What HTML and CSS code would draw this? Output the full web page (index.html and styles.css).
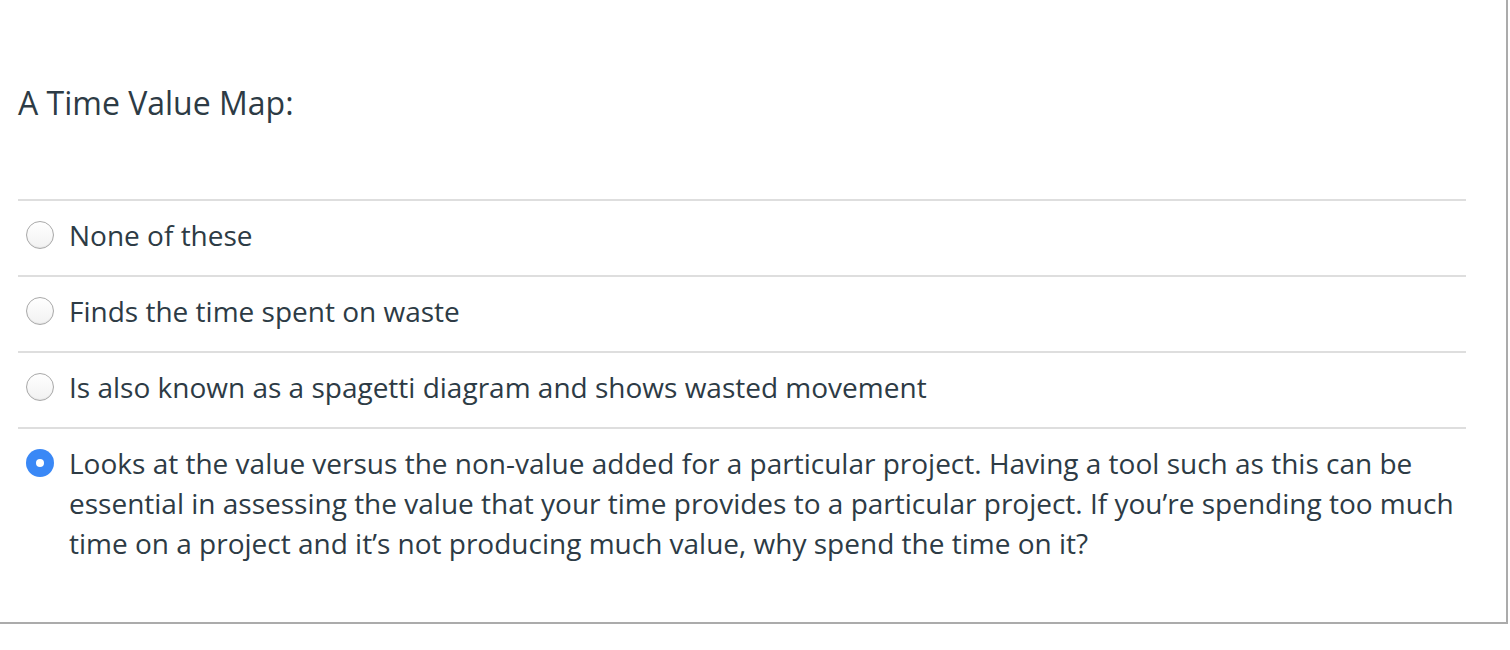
FILE: index.html
```html
<!DOCTYPE html>
<html>
<head>
<meta charset="utf-8">
<link rel="stylesheet" href="styles.css">
</head>
<body>
<div class="card">
  <div class="question">A Time Value Map:</div>
  <div class="answers">
    <div class="answer">
      <span class="radio"></span>
      <span class="label">None of these</span>
    </div>
    <div class="answer">
      <span class="radio"></span>
      <span class="label">Finds the time spent on waste</span>
    </div>
    <div class="answer">
      <span class="radio"></span>
      <span class="label">Is also known as a spagetti diagram and shows wasted movement</span>
    </div>
    <div class="answer">
      <span class="radio checked"></span>
      <span class="label">Looks at the value versus the non-value added for a particular project. Having a tool such as this can be essential in assessing the value that your time provides to a particular project. If you’re spending too much time on a project and it’s not producing much value, why spend the time on it?</span>
    </div>
  </div>
</div>
</body>
</html>
```

FILE: styles.css
```css
html, body {
  margin: 0;
  padding: 0;
  background: #ffffff;
}

.card {
  box-sizing: border-box;
  width: 1508px;
  height: 624px;
  border-right: 2px solid #ababab;
  border-bottom: 2px solid #ababab;
  padding: 0 40px 0 18px;
  font-family: "Open Sans", "Liberation Sans", sans-serif;
  color: #2d3b45;
}

.question {
  font-size: 32px;
  line-height: 44px;
  padding-top: 81px;
  box-sizing: border-box;
  height: 199px;
}

.answer {
  display: flex;
  align-items: flex-start;
  border-top: 2px solid #dedede;
  padding: 14px 0 20px 8px;
  gap: 15px;
}

.label {
  font-size: 28px;
  line-height: 40px;
}

.radio {
  flex: none;
  box-sizing: border-box;
  width: 28px;
  height: 28px;
  margin-top: 6px;
  border-radius: 50%;
  border: 1px solid #a9a9a9;
  background: linear-gradient(#ffffff, #f2f2f2);
  box-shadow: inset 0 -1px 1px rgba(0,0,0,0.06);
}

.radio.checked {
  border: none;
  background: #3a88f6;
  position: relative;
  box-shadow: none;
}

.radio.checked::after {
  content: "";
  position: absolute;
  left: 10px;
  top: 10px;
  width: 8px;
  height: 8px;
  border-radius: 50%;
  background: #ffffff;
}
```
